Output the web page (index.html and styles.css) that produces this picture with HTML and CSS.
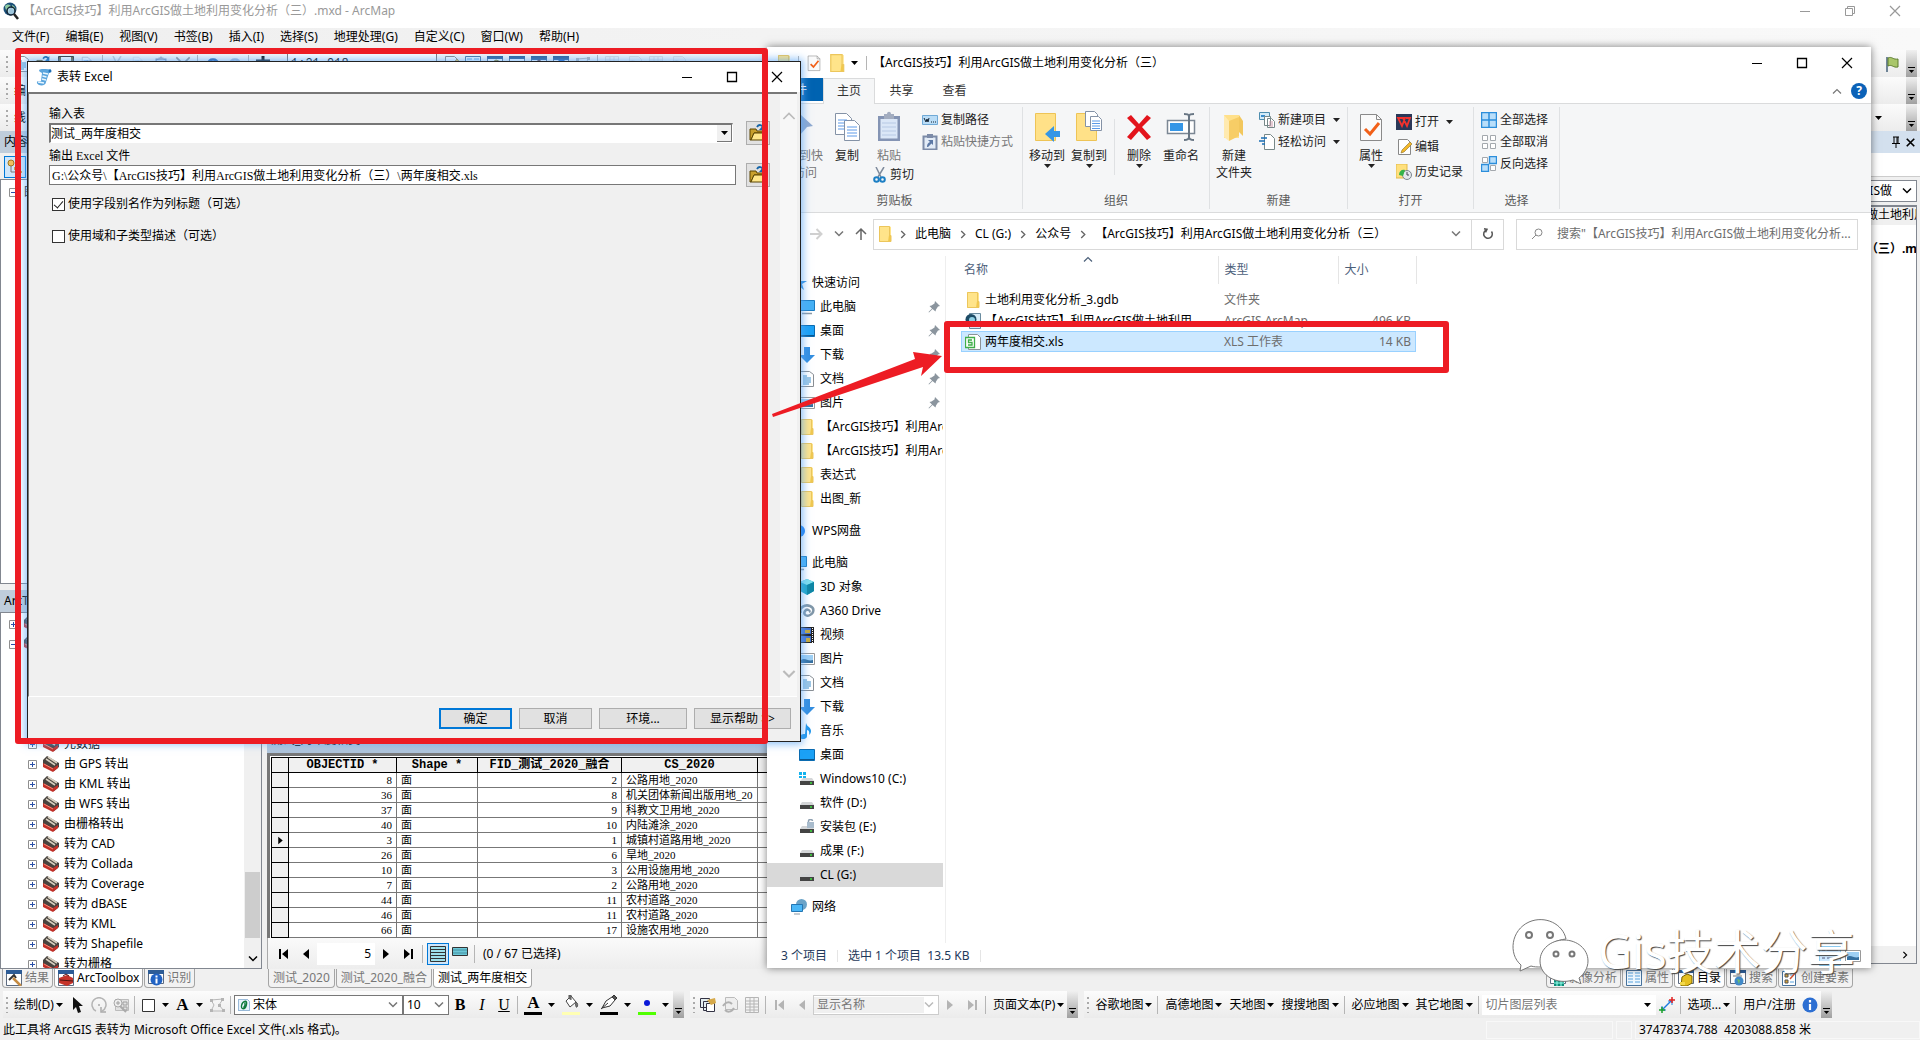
FILE: index.html
```html
<!DOCTYPE html>
<html lang="zh-CN">
<head>
<meta charset="utf-8">
<title>ArcMap</title>
<link rel="stylesheet" href="styles.css">
</head>
<body>
<svg class="defs" aria-hidden="true">
  <symbol id="caret" viewBox="0 0 7 4"><path d="M0 0h7L3.500 4z" fill="currentColor"/></symbol>
  <symbol id="chev" viewBox="0 0 10 6"><path d="M1 .5l4 4 4-4" fill="none" stroke="currentColor" stroke-width="1.500"/></symbol>
  <symbol id="chev-r" viewBox="0 0 6 10"><path d="M1 1l4 4-4 4" fill="none" stroke="currentColor" stroke-width="1.500"/></symbol>
  <symbol id="chev-up" viewBox="0 0 10 6"><path d="M1 5.500l4-4 4 4" fill="none" stroke="currentColor" stroke-width="1.200"/></symbol>
  <symbol id="min" viewBox="0 0 12 12"><path d="M1 6.500h10" stroke="currentColor"/></symbol>
  <symbol id="max" viewBox="0 0 12 12"><path d="M1.500 1.500h9v9h-9z" fill="none" stroke="currentColor" stroke-width="1.300"/></symbol>
  <symbol id="restore" viewBox="0 0 12 12"><path d="M1.500 3.500h7v7h-7zM3.500 3.500v-2h7v7h-2" fill="none" stroke="currentColor"/></symbol>
  <symbol id="close" viewBox="0 0 12 12"><path d="M1 1l10 10M11 1L1 11" stroke="currentColor" stroke-width="1.200"/></symbol>
  <symbol id="globe" viewBox="0 0 18 18"><circle cx="8" cy="7" r="6.500" fill="#1b4f78"/><path d="M3 4c3-3 6-1 6 1s-2 1-2 4-4-1-4-5zM10 3c3 1 4 4 3 6l-3-2z" fill="#8cc9a0"/><circle cx="9" cy="9" r="4" fill="#bfe4f5" fill-opacity=".8" stroke="#123" stroke-width="1.500"/><path d="M12 12l4 5" stroke="#222" stroke-width="2.500"/></symbol>
  <symbol id="scroll" viewBox="0 0 18 18"><path d="M4 2c3-2 8 0 12-1-1 2 0 4-2 4l-3 9c0 3-4 4-7 3-2-1-3-3-1-4 1 0 2 1 3 0l1-8c-1-1-3-1-3-3z" fill="#5ba5dd"/><path d="M8 5l5 1M7.500 8l4 1M7 11l4 1M3 14l6 1" stroke="#e8f6ff" stroke-width="1.300"/><circle cx="15" cy="3" r="1.500" fill="#1f6fb5"/></symbol>
  <symbol id="folder" viewBox="0 0 16 16"><path d="M2 0h10l2 1v15H2z" fill="#ffe48a"/><path d="M12 9h2v7h-3z" fill="#f1c84c"/><path d="M2.500.5h10v9h1.500v6H2.500z" fill="none" stroke="#ecc65c"/></symbol>
  <symbol id="openf" viewBox="0 0 18 18"><path d="M1 5h6l1 2h7v2H5l-3 7H1z" fill="#c8a02c" stroke="#5a4500"/><path d="M5 9h13l-3 7H2z" fill="#ffe78a" stroke="#5a4500"/><path d="M8 3c2-3 5-2 6 0" fill="none" stroke="#1464a8" stroke-width="2"/><path d="M15 0v6h-5z" fill="#1464a8"/></symbol>
  <symbol id="doccheck" viewBox="0 0 32 32"><path d="M5.500 3.500h16l5 5v21h-21z" fill="#fafafa" stroke="#8a8a8a"/><path d="M21.500 3.500v5h5" fill="none" stroke="#8a8a8a"/><path d="M10 18l5 5 9-11" fill="none" stroke="#f26018" stroke-width="3"/></symbol>
  <symbol id="pinbig" viewBox="0 0 32 32"><path d="M18 4l12 11-6 1-7 8-8-7 8-7z" fill="#8fa9cf"/></symbol>
  <symbol id="copy" viewBox="0 0 32 32"><g fill="#fff" stroke="#8492a6"><path d="M4.500 2.500h11l5 5v16h-16z"/><path d="M13.500 9.500h10l5 5v15h-15z"/></g><path d="M7 9h9M7 12h6M7 15h6M7 18h6M16 16h10M16 19h10M16 22h10M16 25h10" stroke="#5c9ae8"/></symbol>
  <symbol id="paste" viewBox="0 0 32 32"><path d="M5 5h22v25H5z" fill="#8494b4"/><path d="M7.500 8h17v19.500h-17z" fill="#dbe7f7"/><path d="M11 3h3c0-3 4-3 4 0h3v5H11z" fill="#a3adc0"/><path d="M9 12h14M9 16h14M9 20h14M9 24h14" stroke="#b7c9e4"/></symbol>
  <symbol id="moveto" viewBox="0 0 32 32"><path d="M4.500 2.500h20v27h-20z" fill="#ffe188" stroke="#eec456"/><path d="M14 23l9-8v5h6v6h-6v5z" fill="#3596e6"/></symbol>
  <symbol id="copyto" viewBox="0 0 32 32"><path d="M3.500 2.500h20v27h-20z" fill="#ffe188" stroke="#eec456"/><g fill="#fff" stroke="#8492a6"><path d="M12.500.5h9l3 3v12h-12z"/><path d="M17.500 5.500h8l3 3v11h-11z"/></g><path d="M19 10h8M19 12.500h8M19 15h8M19 17.500h8" stroke="#5c9ae8"/></symbol>
  <symbol id="del" viewBox="0 0 32 32"><path d="M4 7l4-3 8 9 8-9 4 3-9 9 9 10-4 3-8-9-8 9-4-3 9-10z" fill="#e3141c"/></symbol>
  <symbol id="rename" viewBox="0 0 32 32"><path d="M2.500 9.500h27v13h-27z" fill="#fff" stroke="#7b8794" stroke-width="1.500"/><path d="M5 12h13v8H5z" fill="#3596e6"/><path d="M19 3c3 0 5 0 5 3v20c0 2-2 3-5 3M29 3c-3 0-5 0-5 3v20c0 2 2 3 5 3" fill="none" stroke="#687684" stroke-width="2"/></symbol>
  <symbol id="newf" viewBox="0 0 32 32"><path d="M6 4h15v23H6z" fill="#ffe08a"/><path d="M11 10l10-4v19l-10 5z" fill="#f7cd66"/><path d="M21 4v17l4 4V10z" fill="#f2c75d"/><path d="M6 4l5 6v20l-5-4z" fill="#ffeab0"/></symbol>
  <symbol id="path" viewBox="0 0 16 16"><path d="M.5 3.500h15v9H.5z" fill="#b9dcf6" stroke="#6fa9d6"/><path d="M2 6l2 4 1-3 1 3 1-4M9 10h1M11 10h1M13 10h1" fill="none" stroke="#123"/></symbol>
  <symbol id="shortcut" viewBox="0 0 16 16"><path d="M1.500 2.500h13v13h-13z" fill="#e3ecf7" stroke="#7c8ba8" stroke-width="2"/><path d="M5 0h6v4H5z" fill="#7c8ba8"/><path d="M5 13c0-3 1-4 3-5L6 6h5v5L9.500 9.500 6 13z" fill="#5d79a5"/></symbol>
  <symbol id="cut" viewBox="0 0 16 16"><path d="M4 0l5 10M12 0L6 10" stroke="#7e8b9c" stroke-width="1.500"/><g fill="none" stroke="#1c7fc4" stroke-width="2"><circle cx="4.500" cy="12.500" r="2.300"/><circle cx="10.500" cy="12.500" r="2.300"/></g></symbol>
  <symbol id="newitem" viewBox="0 0 16 16"><path d="M.5.5h10v7H.5z" fill="#d4ecf9" stroke="#4d8dae"/><path d="M2 3h4v2H2z" fill="#3a8dcc"/><path d="M5.500 4.500h6v9h-6zM8.500 6.500h4l3 3v6h-7z" fill="#fff" stroke="#788"/><path d="M10 10h4M10 12h4M10 14h4" stroke="#c9a"/></symbol>
  <symbol id="easy" viewBox="0 0 16 16"><path d="M5.500.5h6l4 4v11h-10z" fill="#fff" stroke="#788"/><path d="M2 4h6M0 7h6M3 10h3" stroke="#1b6fb5" stroke-width="1.500"/></symbol>
  <symbol id="wps" viewBox="0 0 16 16"><path d="M0 0h16v16H0z" fill="#2a3858"/><path d="M2 4h7l-3 8zM7 4l4 8 3-8h-4" fill="none" stroke="#f3322d" stroke-width="1.800"/></symbol>
  <symbol id="edit" viewBox="0 0 16 16"><path d="M2.500.5h9l3 3v12h-12z" fill="#fff" stroke="#888"/><path d="M5 14l1-3 8-8 2 2-8 8z" fill="#f4b929" stroke="#8a6d2a" stroke-width=".6"/></symbol>
  <symbol id="history" viewBox="0 0 16 16"><path d="M0 0h11v14H0z" fill="#ffe07d" stroke="#e2b94c"/><circle cx="11" cy="11" r="4.500" fill="#e4e8ec" stroke="#7c858e"/><path d="M11 8v3h2" stroke="#445" fill="none"/><path d="M3 11c0-4 3-6 6-5l-2 6z" fill="#35b34a"/></symbol>
  <symbol id="selall" viewBox="0 0 16 16"><path d="M.5.5h15v15H.5zM8 0v16M0 8h16" fill="#b8defa" stroke="#2c8edb" stroke-width="1.500"/></symbol>
  <symbol id="selnone" viewBox="0 0 16 16"><path d="M1.500 1.500h5v5h-5zM9.500 1.500h5v5h-5zM1.500 9.500h5v5h-5zM9.500 9.500h5v5h-5z" fill="#fff" stroke="#a3a8ad"/></symbol>
  <symbol id="selinv" viewBox="0 0 16 16"><path d="M1.500 1.500h5v5h-5zM9.500 9.500h5v5h-5z" fill="#fff" stroke="#a3a8ad"/><path d="M8.500.5h7v7h-7zM.5 8.500h7v7h-7z" fill="#b8defa" stroke="#2c8edb" stroke-width="1.400"/></symbol>
  <symbol id="pc" viewBox="0 0 16 16"><path d="M.5 1.500h15v10H.5z" fill="#45b1f5" stroke="#1c7cc0"/><path d="M3 14.500h10" stroke="#8b98a5" stroke-width="1.500"/></symbol>
  <symbol id="desk" viewBox="0 0 16 16"><path d="M.5 2.500h15v11H.5z" fill="#1ba1f5" stroke="#0a6bb0"/><path d="M1 12.500h14" stroke="#0a5890"/></symbol>
  <symbol id="down" viewBox="0 0 16 16"><path d="M5 0h6v8h5l-8 8-8-8h5z" fill="#338ee0"/></symbol>
  <symbol id="doc" viewBox="0 0 16 16"><path d="M1.500.5h9l4 3v12h-13z" fill="#fff" stroke="#8a8f94"/><path d="M4 5h4M4 7h8M4 9h8M4 11h8M4 13h6" stroke="#3d8ec9"/></symbol>
  <symbol id="pic" viewBox="0 0 16 16"><path d="M.5 2.500h15v11H.5z" fill="#fff" stroke="#999"/><path d="M2 4h12v8H2z" fill="#9fd0f4"/><path d="M2 9c4-3 7 2 12 0v3H2z" fill="#356f9f"/></symbol>
  <symbol id="cube" viewBox="0 0 16 16"><path d="M8 0l7 3v9l-7 4-7-4V3z" fill="#1ea7c5"/><path d="M8 0l7 3-7 3-7-3z" fill="#7fe0ee"/><path d="M8 6l7-3v9l-7 4z" fill="#0e86a4"/></symbol>
  <symbol id="a360" viewBox="0 0 16 16"><path d="M2 10c-3-5 4-9 9-7s4 7 0 9-7-1-5-4 6 0 4 1" fill="none" stroke="#8197a8" stroke-width="2.500"/></symbol>
  <symbol id="undo" viewBox="0 0 16 16"><path d="M4 8c1-6 9-6 10 0v6" fill="none" stroke="#2a5ea8" stroke-width="2.500"/><path d="M0 5l9 1-6 6z" fill="#2a5ea8"/></symbol>
  <symbol id="add" viewBox="0 0 16 16"><path d="M8 0v16M1 5h14" stroke="#111" stroke-width="3"/></symbol>
  <symbol id="save" viewBox="0 0 16 16"><path d="M.5.5h15v15H.5z" fill="#6b6436" stroke="#333"/><path d="M3 1h10v8H3z" fill="#fff"/></symbol>
  <symbol id="video" viewBox="0 0 16 16"><path d="M0 0h15v16H0z" fill="#222"/><path d="M2 1h10v6H2zM2 9h10v6H2z" fill="#4573cf"/><path d="M6 3h5v3H6zM7 11h4v4H7z" fill="#c9a934"/><path d="M13.500 1v15" stroke="#fff" stroke-dasharray="1 1"/></symbol>
  <symbol id="music" viewBox="0 0 16 16"><path d="M7 0c1 4 5 4 5 8 0 2-1 3-2 4 1-4-1-5-2-5v6c0 4-7 4-7 1s3-3 5-3z" fill="#1e95ea"/></symbol>
  <symbol id="drive" viewBox="0 0 16 16"><path d="M3 7h10l2 3H1z" fill="#d4d6d8"/><path d="M1 10h14v4H1z" fill="#444"/><path d="M11 12h2" stroke="#3ee03e" stroke-width="1.500"/></symbol>
  <symbol id="drivec" viewBox="0 0 16 16"><path d="M0 1h3v3H0zM4 1h3v3H4zM0 5h3v2H0zM4 5h3v2H4z" fill="#12b2ee"/><path d="M4 7h9l2 3H1z" fill="#d4d6d8"/><path d="M1 10h14v4H1z" fill="#444"/><path d="M11 12h2" stroke="#3ee03e" stroke-width="1.500"/></symbol>
  <symbol id="drivee" viewBox="0 0 16 16"><path d="M3 7h10l2 3H1z" fill="#d4d6d8"/><path d="M1 10h14v4H1z" fill="#444"/><path d="M9.500 4V2c0-2 4-2 4 0" fill="none" stroke="#8fa1b2" stroke-width="1.500"/><path d="M8 3h7v6H8z" fill="#a9bccd"/><path d="M11 12h2" stroke="#3ee03e" stroke-width="1.500"/></symbol>
  <symbol id="net" viewBox="0 0 16 16"><circle cx="10.500" cy="5.500" r="5.500" fill="#6aa3c8"/><path d="M.5 5.500h11v7H.5z" fill="#4ab7f7" stroke="#2476b3"/><path d="M3 15h6" stroke="#8b98a5"/></symbol>
  <symbol id="star" viewBox="0 0 16 16"><path d="M8 1l2 5h6l-5 3 2 6-5-4-5 4 2-6-5-3h6z" fill="#2f8fe0"/></symbol>
  <symbol id="cloud" viewBox="0 0 16 16"><circle cx="8" cy="8" r="6" fill="#1b7ff0"/></symbol>
  <symbol id="pin" viewBox="0 0 12 12"><path d="M7 0l5 5-2 .5-2 3-.5 2L4.500 8 1 11.500l-.5-.5L4 7.500 1.500 5l2-.5 3-2z" fill="#8b959e"/></symbol>
  <symbol id="mxd" viewBox="0 0 16 16"><path d="M4.500.5h11v15h-11z" fill="#d9edf8" stroke="#6b8ca0"/><circle cx="6" cy="6.500" r="5.500" fill="#1d4c66"/><circle cx="7" cy="7" r="3" fill="#8fd0e4"/></symbol>
  <symbol id="xls" viewBox="0 0 16 16"><path d="M3.500.5h9l3 3v12h-12z" fill="#fff" stroke="#8b9297"/><path d="M.5 3.500h9v10h-9z" fill="#fff" stroke="#3fae49" stroke-width="1.300"/><path d="M7 6H3.500v2.500H7V11H3" fill="none" stroke="#3fae49" stroke-width="1.300"/></symbol>
  <symbol id="toolset" viewBox="0 0 16 16"><path d="M0 4l4-4 12 7v4l-5 4L0 9z" fill="#47423e"/><path d="M3 3l9 6M5 1l9 6" stroke="#d6cdbd" stroke-width="1.600"/><path d="M0 7l10 5 5-3v3l-5 4L0 11z" fill="#c23028"/><path d="M1 8l9 5" stroke="#f08a78"/></symbol>
  <symbol id="plus" viewBox="0 0 9 9"><path d="M.5.5h8v8h-8z" fill="#fff" stroke="#8f8f8f"/><path d="M2 4.500h5M4.500 2v5" stroke="#2a50a8"/></symbol>
  <symbol id="minus" viewBox="0 0 9 9"><path d="M.5.5h8v8h-8z" fill="#fff" stroke="#8f8f8f"/><path d="M2 4.500h5" stroke="#2a50a8"/></symbol>
  <symbol id="hammer" viewBox="0 0 16 16"><path d="M.5.5h15v15H.5z" fill="#fff" stroke="#5d6b80"/><path d="M0 0h16v4H0z" fill="#2d5c96"/><path d="M3 10l5-5 2 3" fill="none" stroke="#333" stroke-width="2"/><path d="M7 8l8 8" stroke="#c58b42" stroke-width="2.500"/></symbol>
  <symbol id="redbox" viewBox="0 0 16 16"><path d="M.5.5h15v15H.5z" fill="#fff" stroke="#5d6b80"/><path d="M0 0h16v4H0z" fill="#2d5c96"/><path d="M1 8l8-3 6 3v5l-6 3-8-3z" fill="#c5342a"/><path d="M5 6l3-2 3 2M2 10l13 1" stroke="#501410" fill="none"/></symbol>
  <symbol id="ident" viewBox="0 0 16 16"><path d="M.5.5h15v13H.5z" fill="#fff" stroke="#5d6b80"/><path d="M0 0h16v4H0z" fill="#2d5c96"/><circle cx="8.500" cy="9.500" r="6" fill="#2163c4"/><path d="M8.500 5.500v2M8.500 8.500v5" stroke="#fff" stroke-width="2"/></symbol>
  <symbol id="winimg" viewBox="0 0 16 16"><path d="M.5.5h15v13H.5z" fill="#fff" stroke="#5d6b80"/><path d="M0 0h16v3H0z" fill="#2d5c96"/><path d="M4 6h10v10H4z" fill="#0b8d78"/><path d="M7 6v10M11 6v10M4 9h10M4 13h10" stroke="#9fe"/></symbol>
  <symbol id="grid" viewBox="0 0 16 16"><path d="M.5.5h15v15H.5z" fill="#eef7fe" stroke="#47729c"/><path d="M2 3h5M9 3h5M2 6h5M9 6h5M2 9h5M9 9h5M2 12h5M9 12h5" stroke="#58a3de"/></symbol>
  <symbol id="catalog" viewBox="0 0 16 16"><path d="M.5.5h15v13H.5z" fill="#fff" stroke="#5d6b80"/><path d="M0 0h16v3H0z" fill="#2d5c96"/><path d="M4 7l5-3 5 2v7l-5 3-6 0z" fill="#e6c020" stroke="#7c6500"/><path d="M2 12h5v3H2z" fill="#f2d84a"/></symbol>
  <symbol id="search" viewBox="0 0 16 16"><path d="M.5.5h15v13H.5z" fill="#fff" stroke="#5d6b80"/><path d="M0 0h16v3H0z" fill="#2d5c96"/><path d="M3 6h9" stroke="#777"/><circle cx="9" cy="11" r="4.500" fill="#418ac9"/><path d="M7 9l3 1-1 4z" fill="#6ec06a"/></symbol>
  <symbol id="create" viewBox="0 0 16 16"><path d="M.5 1.500h13v14H.5z" fill="#fff" stroke="#47729c"/><path d="M3 4h3v3H3zM3 10h3v3H3z" fill="#d9a334" stroke="#555"/><path d="M8 5h4M8 12h4" stroke="#58a3de"/><path d="M8 9l7-8" stroke="#d05030" stroke-width="1.500"/></symbol>
  <symbol id="cursor" viewBox="0 0 16 16"><path d="M4 0v13l3-3 2 6 3-1-2-6h4z" fill="#111"/></symbol>
  <symbol id="rot" viewBox="0 0 16 16"><path d="M5 14a7 7 0 1 1 6 0" fill="none" stroke="#b5b5b5" stroke-width="1.500"/><path d="M10 10v5h5M8 7v2" stroke="#aaa" stroke-width="1.500" fill="none"/></symbol>
  <symbol id="zsel" viewBox="0 0 16 16"><path d="M2.500 2.500h13v11h-13z" fill="#e2e2e2" stroke="#bbb"/><circle cx="5" cy="6" r="4" fill="#eee" stroke="#a8a8a8"/><path d="M3 6h4M5 4v4M10 5h4v3h-4zM10 10h4v3h-4z" stroke="#a0a0a0" fill="none"/><path d="M7 9l6 6" stroke="#aaa" stroke-width="2"/></symbol>
  <symbol id="rect" viewBox="0 0 16 16"><path d="M2.500 2.500h12v12h-12z" fill="#fff" stroke="#333"/></symbol>
  <symbol id="verts" viewBox="0 0 16 16"><path d="M2 3l12-1-4 6 5 6H2l3-6z" fill="none" stroke="#b8b8b8"/><path d="M1 2h3v3H1zM12 1h3v3h-3zM9 7h3v3H9zM13 12h3v3h-3zM1 12h3v3H1z" fill="#b4b4b4"/></symbol>
  <symbol id="opent" viewBox="0 0 16 16"><path d="M.5.5h12l3 3v12H.5z" fill="#e8f2fb" stroke="#6c9ac5"/><path d="M10 3c-6 1-7 10-3 10s6-9 3-10zM9 5c1 2 0 6-2 6" fill="none" stroke="#117a3c" stroke-width="1.800"/></symbol>
  <symbol id="bucket" viewBox="0 0 16 16"><path d="M3 6l5-5 5 6-6 5z" fill="#fff" stroke="#444"/><path d="M13 7c2 1 2 4 1 5s-2-2-1-5M6 4V0h2v5" fill="#777" stroke="#555"/></symbol>
  <symbol id="pen" viewBox="0 0 16 16"><path d="M1 13l4-7 6-4 3 3-5 6z" fill="#fff" stroke="#333"/><path d="M0 14l7-6M11 2l2-2 3 3-2 2" stroke="#333" fill="#555"/></symbol>
  <symbol id="dot" viewBox="0 0 16 16"><circle cx="8" cy="8" r="3" fill="#0a18d8"/></symbol>
  <symbol id="pages" viewBox="0 0 16 16"><path d="M.5 1.500h9v9h-9zM3.500 4.500h9v9h-9z" fill="#e4eef2" stroke="#334"/><path d="M6.500 6.500h8v8h-8z" fill="#fff" stroke="#334"/><path d="M7 3l8-2 1 5-5 2z" fill="#d6a94a"/></symbol>
  <symbol id="refresh2" viewBox="0 0 16 16"><path d="M3.500.5h9l3 3v9h-12z" fill="#eee" stroke="#bbb"/><path d="M1 9c3-5 7-4 9-2M12 11c-3 5-7 4-9 2" stroke="#b0b0b0" stroke-width="2" fill="none"/></symbol>
  <symbol id="tbl" viewBox="0 0 16 16"><path d="M1.500.5h13v15h-13zM1 4h14M1 7h14M1 10h14M1 13h14M6 1v15M10 1v15" fill="#f3f3f3" stroke="#b5b5b5"/></symbol>
  <symbol id="first" viewBox="0 0 12 12"><path d="M1 1h2v10H1zM10 1v10L4 6z" fill="currentColor"/></symbol>
  <symbol id="prev" viewBox="0 0 12 12"><path d="M9 1v10L3 6z" fill="currentColor"/></symbol>
  <symbol id="next" viewBox="0 0 12 12"><path d="M3 1v10l6-5z" fill="currentColor"/></symbol>
  <symbol id="last" viewBox="0 0 12 12"><path d="M2 1v10l6-5zM9 1h2v10H9z" fill="currentColor"/></symbol>
  <symbol id="rec" viewBox="0 0 16 16"><path d="M.5.5h15v15H.5z" fill="#9fe0ea" stroke="#333"/><path d="M1 3.500h14M1 6.500h14M1 9.500h14M1 12.500h14" stroke="#333"/></symbol>
  <symbol id="recs" viewBox="0 0 16 16"><path d="M.5 1.500h15v8H.5z" fill="#6cc8d8" stroke="#333"/><path d="M1 4h14M1 7h14" stroke="#4590a0"/></symbol>
  <symbol id="link" viewBox="0 0 16 16"><path d="M4 12l8-8" stroke="#1e7be0" stroke-width="1.500"/><path d="M9 4h4v4M3 9v4h4" fill="none" stroke="#1e7be0"/><path d="M13 0v6M10 3h6" stroke="#e02020" stroke-width="1.500"/><path d="M3 10v6M0 13h6" stroke="#18a028" stroke-width="1.500"/></symbol>
  <symbol id="info" viewBox="0 0 16 16"><circle cx="8" cy="8" r="7.500" fill="#2d6fd2"/><path d="M8 3v2.500M8 7v6" stroke="#fff" stroke-width="2.200"/></symbol>
  <symbol id="flag" viewBox="0 0 16 16"><path d="M3 1v15" stroke="#45617a" stroke-width="1.500"/><path d="M4 2c4-2 5 2 10 1v8c-5 1-6-3-10-1z" fill="#a9c66a" stroke="#5c7c2e"/></symbol>
  <symbol id="layers" viewBox="0 0 16 16"><circle cx="4" cy="4" r="3" fill="#f0c060" stroke="#a07820"/><path d="M4 7v6h4M8 5h3" stroke="#777" fill="none"/><path d="M7 8h4v3H7zM8 12h7v2H8z" fill="#c9a050"/></symbol>
</svg>

<div class="app">
  <header class="titlebar">
    <svg class="i18"><use href="#globe"/></svg>
    <span class="grow">【ArcGIS技巧】利用ArcGIS做土地利用变化分析（三）.mxd - ArcMap</span>
    <span class="winbtns wide"><svg><use href="#min"/></svg><svg><use href="#restore"/></svg><svg><use href="#close"/></svg></span>
  </header>
  <nav class="menubar">
    <a href="#">文件(F)</a><a href="#">编辑(E)</a><a href="#">视图(V)</a><a href="#">书签(B)</a><a href="#">插入(I)</a><a href="#">选择(S)</a><a href="#">地理处理(G)</a><a href="#">自定义(C)</a><a href="#">窗口(W)</a><a href="#">帮助(H)</a>
  </nav>
  <div class="toprows">
    <div class="toprow">
      <span class="grip"></span>
      <svg class="i16"><use href="#doc"/></svg><svg class="i16"><use href="#openf"/></svg><svg class="i16"><use href="#save"/></svg><svg class="i16"><use href="#copy"/></svg><i class="sep"></i>
      <svg class="i16 faint"><use href="#cut"/></svg><svg class="i16 faint"><use href="#copy"/></svg><svg class="i16"><use href="#paste"/></svg><svg class="i16 faint"><use href="#close"/></svg><i class="sep"></i>
      <svg class="i16"><use href="#undo"/></svg><svg class="i16 faint"><use href="#undo"/></svg><i class="sep"></i>
      <svg class="i16"><use href="#add"/></svg><span class="scale">1:21,918</span>
      <svg class="i16"><use href="#edit"/></svg><svg class="i16"><use href="#grid"/></svg><svg class="i16"><use href="#catalog"/></svg><svg class="i16"><use href="#search"/></svg><svg class="i16"><use href="#redbox"/></svg><svg class="i16"><use href="#ident"/></svg><svg class="i16"><use href="#verts"/></svg><i class="sep"></i>
      <svg class="i16 faint"><use href="#tbl"/></svg><svg class="i16 faint"><use href="#refresh2"/></svg><svg class="i16 faint"><use href="#tbl"/></svg><svg class="i16 faint"><use href="#refresh2"/></svg>
      <span class="grow"></span>
      <svg class="i16"><use href="#flag"/></svg><span class="tbend"><svg><use href="#caret"/></svg></span>
    </div>
    <div class="toprow"><span class="grip"></span><span>编</span><span class="grow"></span><span class="tbend"><svg><use href="#caret"/></svg></span></div>
    <div class="toprow"><span class="grip"></span><span>线</span><span class="grow"></span><span>析</span><svg class="caret"><use href="#caret"/></svg><span class="tbend far"><svg><use href="#caret"/></svg></span></div>
  </div>

  <main class="work">
    <section class="dock left">
      <h2 class="dockhead">内容</h2>
      <div class="docktools"><button class="toolon" aria-label="按绘制顺序列出"><svg class="i16"><use href="#layers"/></svg></button></div>
      <div class="tree contents"><div class="trow top"><svg class="pm"><use href="#minus"/></svg><span>图</span></div></div>
      <h2 class="dockhead second">ArcToolbox</h2>
      <div class="tree toolbox">
        <div class="rows">
          <div class="trow top"><svg class="pm"><use href="#plus"/></svg><svg class="i16"><use href="#toolset"/></svg></div>
          <div class="trow top"><svg class="pm"><use href="#minus"/></svg><svg class="i16"><use href="#toolset"/></svg></div>
          <div class="sub">
            <div class="trow"><svg class="pm"><use href="#plus"/></svg><svg class="i16"><use href="#toolset"/></svg>元数据</div>
            <div class="trow"><svg class="pm"><use href="#plus"/></svg><svg class="i16"><use href="#toolset"/></svg>由 GPS 转出</div>
            <div class="trow"><svg class="pm"><use href="#plus"/></svg><svg class="i16"><use href="#toolset"/></svg>由 KML 转出</div>
            <div class="trow"><svg class="pm"><use href="#plus"/></svg><svg class="i16"><use href="#toolset"/></svg>由 WFS 转出</div>
            <div class="trow"><svg class="pm"><use href="#plus"/></svg><svg class="i16"><use href="#toolset"/></svg>由栅格转出</div>
            <div class="trow"><svg class="pm"><use href="#plus"/></svg><svg class="i16"><use href="#toolset"/></svg>转为 CAD</div>
            <div class="trow"><svg class="pm"><use href="#plus"/></svg><svg class="i16"><use href="#toolset"/></svg>转为 Collada</div>
            <div class="trow"><svg class="pm"><use href="#plus"/></svg><svg class="i16"><use href="#toolset"/></svg>转为 Coverage</div>
            <div class="trow"><svg class="pm"><use href="#plus"/></svg><svg class="i16"><use href="#toolset"/></svg>转为 dBASE</div>
            <div class="trow"><svg class="pm"><use href="#plus"/></svg><svg class="i16"><use href="#toolset"/></svg>转为 KML</div>
            <div class="trow"><svg class="pm"><use href="#plus"/></svg><svg class="i16"><use href="#toolset"/></svg>转为 Shapefile</div>
            <div class="trow"><svg class="pm"><use href="#plus"/></svg><svg class="i16"><use href="#toolset"/></svg>转为栅格</div>
          </div>
        </div>
        <div class="vscroll"><i class="thumb"></i><svg><use href="#chev"/></svg></div>
      </div>
      <div class="tabs">
        <button class="tab"><svg class="i16"><use href="#hammer"/></svg>结果</button><button class="tab on"><svg class="i16"><use href="#redbox"/></svg>ArcToolbox</button><button class="tab"><svg class="i16"><use href="#ident"/></svg>识别</button>
      </div>
    </section>

    <section class="center">
      <div class="mapview"></div>
      <h2 class="tblhead">测试_两年度相交</h2>
      <div class="tblframe">
        <table class="attr">
          <colgroup><col class="c0"><col class="c1"><col class="c2"><col class="c3"><col class="c4"><col></colgroup>
          <thead><tr><th></th><th>OBJECTID *</th><th>Shape *</th><th>FID_测试_2020_融合</th><th>CS_2020</th><th></th></tr></thead>
          <tbody>
            <tr><th></th><td class="n">8</td><td>面</td><td class="n">2</td><td>公路用地_2020</td><td></td></tr>
            <tr><th></th><td class="n">36</td><td>面</td><td class="n">8</td><td>机关团体新闻出版用地_20</td><td></td></tr>
            <tr><th></th><td class="n">37</td><td>面</td><td class="n">9</td><td>科教文卫用地_2020</td><td></td></tr>
            <tr><th></th><td class="n">40</td><td>面</td><td class="n">10</td><td>内陆滩涂_2020</td><td></td></tr>
            <tr class="cur"><th><svg><use href="#next"/></svg></th><td class="n">3</td><td>面</td><td class="n">1</td><td>城镇村道路用地_2020</td><td></td></tr>
            <tr><th></th><td class="n">26</td><td>面</td><td class="n">6</td><td>旱地_2020</td><td></td></tr>
            <tr><th></th><td class="n">10</td><td>面</td><td class="n">3</td><td>公用设施用地_2020</td><td></td></tr>
            <tr><th></th><td class="n">7</td><td>面</td><td class="n">2</td><td>公路用地_2020</td><td></td></tr>
            <tr><th></th><td class="n">44</td><td>面</td><td class="n">11</td><td>农村道路_2020</td><td></td></tr>
            <tr><th></th><td class="n">46</td><td>面</td><td class="n">11</td><td>农村道路_2020</td><td></td></tr>
            <tr><th></th><td class="n">66</td><td>面</td><td class="n">17</td><td>设施农用地_2020</td><td></td></tr>
          </tbody>
        </table>
      </div>
      <div class="recbar">
        <button class="ib" aria-label="第一条"><svg class="i12"><use href="#first"/></svg></button><button class="ib" aria-label="上一条"><svg class="i12"><use href="#prev"/></svg></button>
        <input class="recno" aria-label="记录" value="5">
        <button class="ib" aria-label="下一条"><svg class="i12"><use href="#next"/></svg></button><button class="ib" aria-label="最后一条"><svg class="i12"><use href="#last"/></svg></button>
        <i class="sep"></i><button class="toolon" aria-label="显示所有记录"><svg class="i16"><use href="#rec"/></svg></button><button class="ib" aria-label="显示所选记录"><svg class="i16"><use href="#recs"/></svg></button><i class="sep"></i>
        <span class="reccount">(0 / 67 已选择)</span>
      </div>
      <div class="tabs"><button class="tab">测试_2020</button><button class="tab">测试_2020_融合</button><button class="tab on">测试_两年度相交</button></div>
    </section>

    <section class="dock right">
      <div class="dockhead tools"><svg viewBox="0 0 12 12"><path d="M3 1h6M4 1v6M8 1v6M7 1v6M2 7.500h8M6 8v4" stroke="#000" fill="none"/></svg><svg class="bold" viewBox="0 0 12 12"><path d="M1 1l10 10M11 1L1 11" stroke="#000" stroke-width="2.200"/></svg></div>
      <div class="blank"></div>
      <div class="loc"><span>ArcGIS做</span><svg><use href="#chev"/></svg></div>
      <div class="catalog">
        <div class="clip crumb">做土地利用</div>
        <div class="clip strong">（三）.mxd</div>
        <div class="hscroll"><svg><use href="#chev-r"/></svg></div>
      </div>
      <div class="tabs">
        <button class="tab"><svg class="i16"><use href="#winimg"/></svg>影像分析</button><button class="tab"><svg class="i16"><use href="#grid"/></svg>属性</button><button class="tab on"><svg class="i16"><use href="#catalog"/></svg>目录</button><button class="tab"><svg class="i16"><use href="#search"/></svg>搜索</button><button class="tab"><svg class="i16"><use href="#create"/></svg>创建要素</button>
      </div>
    </section>
  </main>

  <div class="drawbars">
    <div class="bar">
      <span class="grip"></span>
      <button class="mb">绘制(D)<svg class="caret"><use href="#caret"/></svg></button>
      <button class="ib" aria-label="选择元素"><svg class="i16"><use href="#cursor"/></svg></button><button class="ib" aria-label="旋转"><svg class="i16"><use href="#rot"/></svg></button><button class="ib" aria-label="缩放至所选"><svg class="i16"><use href="#zsel"/></svg></button><i class="sep"></i>
      <button class="ib dd" aria-label="矩形"><svg class="i16"><use href="#rect"/></svg><svg class="caret"><use href="#caret"/></svg></button>
      <button class="ib dd" aria-label="文本"><b class="glyph">A</b><svg class="caret"><use href="#caret"/></svg></button>
      <button class="ib" aria-label="编辑折点"><svg class="i16"><use href="#verts"/></svg></button><i class="sep"></i>
      <span class="box font"><svg class="i12"><use href="#opent"/></svg><select aria-label="字体"><option>宋体</option></select><svg class="chev"><use href="#chev"/></svg></span>
      <span class="box size"><select aria-label="字号"><option>10</option></select><svg class="chev"><use href="#chev"/></svg></span>
      <button class="ib fmt"><b>B</b></button><button class="ib fmt"><i>I</i></button><button class="ib fmt"><u>U</u></button><i class="sep"></i>
      <button class="ib col" aria-label="字体颜色"><span class="black"><b class="glyph">A</b></span><svg class="caret"><use href="#caret"/></svg></button>
      <button class="ib col" aria-label="填充颜色"><span class="cream"><svg class="i16"><use href="#bucket"/></svg></span><svg class="caret"><use href="#caret"/></svg></button>
      <button class="ib col" aria-label="线颜色"><span class="black"><svg class="i16"><use href="#pen"/></svg></span><svg class="caret"><use href="#caret"/></svg></button>
      <button class="ib col" aria-label="标记颜色"><span class="green"><svg class="i16"><use href="#dot"/></svg></span><svg class="caret"><use href="#caret"/></svg></button>
      <span class="tbend"><svg><use href="#caret"/></svg></span>
    </div>
    <div class="bar">
      <span class="grip"></span>
      <button class="ib" aria-label="数据驱动页面设置"><svg class="i16"><use href="#pages"/></svg></button><button class="ib" aria-label="刷新"><svg class="i16"><use href="#refresh2"/></svg></button><button class="ib" aria-label="表"><svg class="i16"><use href="#tbl"/></svg></button><i class="sep"></i>
      <button class="ib off" aria-label="首页"><svg class="i12"><use href="#first"/></svg></button><button class="ib off" aria-label="上一页"><svg class="i12"><use href="#prev"/></svg></button>
      <span class="box page"><select aria-label="页面"><option>显示名称</option></select><svg class="chev"><use href="#chev"/></svg></span>
      <button class="ib off" aria-label="下一页"><svg class="i12"><use href="#next"/></svg></button><button class="ib off" aria-label="末页"><svg class="i12"><use href="#last"/></svg></button><i class="sep"></i>
      <button class="mb">页面文本(P)<svg class="caret"><use href="#caret"/></svg></button>
      <span class="tbend"><svg><use href="#caret"/></svg></span>
    </div>
    <div class="bar">
      <span class="grip"></span>
      <button class="mb">谷歌地图<svg class="caret"><use href="#caret"/></svg></button><i class="sep"></i>
      <button class="mb">高德地图<svg class="caret"><use href="#caret"/></svg></button><button class="mb">天地图<svg class="caret"><use href="#caret"/></svg></button><button class="mb">搜搜地图<svg class="caret"><use href="#caret"/></svg></button><i class="sep"></i>
      <button class="mb">必应地图<svg class="caret"><use href="#caret"/></svg></button><button class="mb">其它地图<svg class="caret"><use href="#caret"/></svg></button><i class="sep"></i>
      <span class="box tiles"><select aria-label="切片图层"><option>切片图层列表</option></select><svg class="caret"><use href="#caret"/></svg></span>
      <button class="ib" aria-label="连接"><svg class="i16"><use href="#link"/></svg></button><i class="sep"></i>
      <button class="mb">选项...<svg class="caret"><use href="#caret"/></svg></button><i class="sep"></i>
      <button class="mb">用户/注册</button><button class="ib" aria-label="信息"><svg class="i16"><use href="#info"/></svg></button>
      <span class="tbend"><svg><use href="#caret"/></svg></span>
    </div>
  </div>
  <footer class="status"><span class="grow">此工具将 ArcGIS 表转为 Microsoft Office Excel 文件(.xls 格式)。</span><i class="cell w1"></i><i class="cell w2"></i><span class="cell coords">37478374.788&nbsp; 4203088.858 米</span></footer>
</div>

<section class="explorer">
  <div class="extitle">
    <svg class="i16"><use href="#folder"/></svg><i class="sep"></i><svg class="i18"><use href="#doccheck"/></svg><svg class="i18"><use href="#folder"/></svg><svg class="caret"><use href="#caret"/></svg><i class="sep"></i>
    <span class="grow">【ArcGIS技巧】利用ArcGIS做土地利用变化分析（三）</span>
    <span class="winbtns"><svg><use href="#min"/></svg><svg><use href="#max"/></svg><svg><use href="#close"/></svg></span>
  </div>
  <div class="extabs">
    <button class="filetab">文件</button><button class="rtab on">主页</button><button class="rtab">共享</button><button class="rtab">查看</button>
    <span class="grow"></span><svg class="chev"><use href="#chev-up"/></svg><span class="help">?</span>
  </div>
  <div class="ribbon">
    <div class="group g1">
      <div class="gbody">
        <button class="big gray"><svg><use href="#pinbig"/></svg>固定到快<br>速访问</button>
        <button class="big"><svg><use href="#copy"/></svg>复制</button>
        <div class="pastecol"><button class="big gray"><svg><use href="#paste"/></svg>粘贴</button><button class="small"><svg class="i16"><use href="#cut"/></svg>剪切</button></div>
        <div class="stack"><button class="small"><svg class="i16"><use href="#path"/></svg>复制路径</button><button class="small gray"><svg class="i16"><use href="#shortcut"/></svg>粘贴快捷方式</button></div>
      </div>
      <div class="glabel">剪贴板</div>
    </div>
    <div class="group g2">
      <div class="gbody">
        <button class="big"><svg><use href="#moveto"/></svg>移动到<svg class="caret"><use href="#caret"/></svg></button>
        <button class="big"><svg><use href="#copyto"/></svg>复制到<svg class="caret"><use href="#caret"/></svg></button>
        <i class="sep"></i>
        <button class="big"><svg><use href="#del"/></svg>删除<svg class="caret"><use href="#caret"/></svg></button>
        <button class="big"><svg><use href="#rename"/></svg>重命名</button>
      </div>
      <div class="glabel">组织</div>
    </div>
    <div class="group g3">
      <div class="gbody">
        <button class="big"><svg><use href="#newf"/></svg>新建<br>文件夹</button>
        <div class="stack"><button class="small"><svg class="i16"><use href="#newitem"/></svg>新建项目<svg class="caret"><use href="#caret"/></svg></button><button class="small"><svg class="i16"><use href="#easy"/></svg>轻松访问<svg class="caret"><use href="#caret"/></svg></button></div>
      </div>
      <div class="glabel">新建</div>
    </div>
    <div class="group g4">
      <div class="gbody">
        <button class="big"><svg><use href="#doccheck"/></svg>属性<svg class="caret"><use href="#caret"/></svg></button>
        <div class="stack loose"><button class="small"><svg class="i16"><use href="#wps"/></svg>打开<svg class="caret"><use href="#caret"/></svg></button><button class="small"><svg class="i16"><use href="#edit"/></svg>编辑</button><button class="small"><svg class="i16"><use href="#history"/></svg>历史记录</button></div>
      </div>
      <div class="glabel">打开</div>
    </div>
    <div class="group g5">
      <div class="gbody">
        <div class="stack"><button class="small"><svg class="i16"><use href="#selall"/></svg>全部选择</button><button class="small"><svg class="i16"><use href="#selnone"/></svg>全部取消</button><button class="small"><svg class="i16"><use href="#selinv"/></svg>反向选择</button></div>
      </div>
      <div class="glabel">选择</div>
    </div>
  </div>
  <div class="addrrow">
    <svg class="fwd" viewBox="0 0 14 14"><path d="M1 7h11M7.500 2l5 5-5 5" fill="none" stroke="#d0d0d0" stroke-width="2"/></svg>
    <svg class="chev"><use href="#chev"/></svg>
    <svg class="up" viewBox="0 0 14 14"><path d="M7 13V2M2 7l5-5 5 5" fill="none" stroke="#666" stroke-width="1.500"/></svg>
    <div class="addr">
      <svg class="i16"><use href="#folder"/></svg><svg class="cr"><use href="#chev-r"/></svg><span>此电脑</span><svg class="cr"><use href="#chev-r"/></svg><span>CL (G:)</span><svg class="cr"><use href="#chev-r"/></svg><span>公众号</span><svg class="cr"><use href="#chev-r"/></svg><span class="grow">【ArcGIS技巧】利用ArcGIS做土地利用变化分析（三）</span><svg class="chev"><use href="#chev"/></svg>
      <span class="reload"><svg viewBox="0 0 12 12"><path d="M9.500 3.500A4.300 4.300 0 1 1 4 2.200M2 .8l3 .6-1.500 3" fill="none" stroke="#555" stroke-width="1.500"/></svg></span>
    </div>
    <label class="searchbox"><svg viewBox="0 0 12 12"><circle cx="7.500" cy="4.500" r="3.500" fill="none" stroke="#888"/><path d="M5 7l-4 4" stroke="#888"/></svg><input type="text" aria-label="搜索" placeholder="搜索&quot;【ArcGIS技巧】利用ArcGIS做土地利用变化分析..."></label>
  </div>
  <div class="exmain">
    <nav class="navpane">
      <a href="#" class="l0"><svg class="i16"><use href="#star"/></svg>快速访问</a>
      <a href="#"><svg class="i16"><use href="#pc"/></svg><span>此电脑</span><svg class="pin"><use href="#pin"/></svg></a>
      <a href="#"><svg class="i16"><use href="#desk"/></svg><span>桌面</span><svg class="pin"><use href="#pin"/></svg></a>
      <a href="#"><svg class="i16"><use href="#down"/></svg><span>下载</span><svg class="pin"><use href="#pin"/></svg></a>
      <a href="#"><svg class="i16"><use href="#doc"/></svg><span>文档</span><svg class="pin"><use href="#pin"/></svg></a>
      <a href="#"><svg class="i16"><use href="#pic"/></svg><span>图片</span><svg class="pin"><use href="#pin"/></svg></a>
      <a href="#"><svg class="i16"><use href="#folder"/></svg><span>【ArcGIS技巧】利用ArcGIS</span></a>
      <a href="#"><svg class="i16"><use href="#folder"/></svg><span>【ArcGIS技巧】利用ArcGIS</span></a>
      <a href="#"><svg class="i16"><use href="#folder"/></svg>表达式</a>
      <a href="#"><svg class="i16"><use href="#folder"/></svg>出图_新</a>
      <a href="#" class="l0 gap"><svg class="i16"><use href="#cloud"/></svg>WPS网盘</a>
      <a href="#" class="l0 gap"><svg class="i16"><use href="#pc"/></svg>此电脑</a>
      <a href="#"><svg class="i16"><use href="#cube"/></svg>3D 对象</a>
      <a href="#"><svg class="i16"><use href="#a360"/></svg>A360 Drive</a>
      <a href="#"><svg class="i16"><use href="#video"/></svg>视频</a>
      <a href="#"><svg class="i16"><use href="#pic"/></svg>图片</a>
      <a href="#"><svg class="i16"><use href="#doc"/></svg>文档</a>
      <a href="#"><svg class="i16"><use href="#down"/></svg>下载</a>
      <a href="#"><svg class="i16"><use href="#music"/></svg>音乐</a>
      <a href="#"><svg class="i16"><use href="#desk"/></svg>桌面</a>
      <a href="#"><svg class="i16"><use href="#drivec"/></svg>Windows10 (C:)</a>
      <a href="#"><svg class="i16"><use href="#drive"/></svg>软件 (D:)</a>
      <a href="#"><svg class="i16"><use href="#drivee"/></svg>安装包 (E:)</a>
      <a href="#"><svg class="i16"><use href="#drive"/></svg>成果 (F:)</a>
      <a href="#" class="sel"><svg class="i16"><use href="#drive"/></svg>CL (G:)</a>
      <a href="#" class="l0 gap"><svg class="i16"><use href="#net"/></svg>网络</a>
    </nav>
    <div class="files">
      <table>
        <colgroup><col class="f1"><col class="f2"><col class="f3"></colgroup>
        <thead><tr><th>名称<svg class="sort"><use href="#chev-up"/></svg></th><th>类型</th><th>大小</th></tr></thead>
        <tbody>
          <tr><td><svg class="i16"><use href="#folder"/></svg>土地利用变化分析_3.gdb</td><td>文件夹</td><td></td></tr>
          <tr><td><svg class="i16"><use href="#mxd"/></svg>【ArcGIS技巧】利用ArcGIS做土地利用</td><td>ArcGIS ArcMap</td><td>496 KB</td></tr>
          <tr class="sel"><td><svg class="i16"><use href="#xls"/></svg>两年度相交.xls</td><td>XLS 工作表</td><td>14 KB</td></tr>
        </tbody>
      </table>
    </div>
  </div>
  <div class="exstatus"><span>3 个项目</span><i class="sep"></i><span>选中 1 个项目&nbsp; 13.5 KB</span><i class="sep"></i><span class="grow"></span>
    <svg class="i24" viewBox="0 0 22 20"><path d="M.5.500h21v19H.5z" fill="#cce8ff" stroke="#8ccaf0"/><path d="M3 4h3M8 4h11M3 8h3M8 8h11M3 12h3M8 12h11M3 16h3M8 16h11" stroke="#557"/></svg><svg class="i16"><use href="#pic"/></svg></div>
</section>

<form class="dialog">
  <div class="dtitle"><svg class="i18"><use href="#scroll"/></svg><span class="grow">表转 Excel</span><span class="winbtns"><svg><use href="#min"/></svg><svg><use href="#max"/></svg><svg><use href="#close"/></svg></span></div>
  <div class="dbody">
    <div class="fields">
      <label for="intable">输入表</label>
      <div class="line"><span class="combo"><select id="intable"><option>测试_两年度相交</option></select><span class="arrow"><svg class="caret"><use href="#caret"/></svg></span></span><button type="button" class="browse" aria-label="浏览输入表"><svg class="i18"><use href="#openf"/></svg></button></div>
      <label for="outfile">输出 Excel 文件</label>
      <div class="line"><input id="outfile" class="text" value="G:\公众号\【ArcGIS技巧】利用ArcGIS做土地利用变化分析（三）\两年度相交.xls"><button type="button" class="browse" aria-label="浏览输出文件"><svg class="i18"><use href="#openf"/></svg></button></div>
      <label class="check"><input type="checkbox" checked>使用字段别名作为列标题（可选）</label>
      <label class="check"><input type="checkbox">使用域和子类型描述（可选）</label>
    </div>
    <div class="dscroll"><svg><use href="#chev-up"/></svg><svg><use href="#chev"/></svg></div>
  </div>
  <div class="dfoot"><button type="button" class="def">确定</button><button type="button">取消</button><button type="button" class="wide">环境...</button><button type="button" class="wider">显示帮助 &gt;&gt;</button></div>
</form>

<div class="mark markdialog"></div>
<div class="mark markfile"></div>
<svg class="markarrow" viewBox="0 0 170 66" aria-hidden="true"><path d="M0 62L143 7 141 0 170 4 149 24 151 15 1 65z" fill="#ed1c24"/></svg>

<div class="watermark">
  <svg viewBox="0 0 78 66"><g fill="#fff" stroke="#777" stroke-width="1"><path d="M9 47C-4 36-1 12 17 4c16-7 34 2 37 17-18 2-28 14-25 28-4 0-7 0-10-1L8 53z"/><path d="M52 22c13 0 24 9 24 21 0 7-4 13-9 17l2 6-8-4c-16 5-33-4-33-19 0-12 11-21 24-21z"/></g><g fill="#fff" stroke="#777" stroke-width="2"><circle cx="17" cy="17" r="3"/><circle cx="38" cy="17" r="3"/><circle cx="44" cy="36" r="2.500"/><circle cx="60" cy="36" r="2.500"/></g></svg>
  <span>Gis技术分享</span>
</div>
</body>
</html>
```

FILE: styles.css
```css
* { box-sizing: border-box; }
body {
  margin: 0;
  font: 12px/16px "Noto Sans", "Noto Sans CJK SC", sans-serif;
  color: #000;
  background: #f0f0f0;
  overflow: hidden;
}
button, input, select { font: inherit; color: inherit; margin: 0; padding: 0; border: 0; background: none; }
select { appearance: none; outline: 0; }
button { display: flex; align-items: center; white-space: nowrap; }
a { color: inherit; text-decoration: none; }
svg { display: block; flex: none; }
h2 { margin: 0; font-size: 12px; font-weight: 400; }
.defs { position: absolute; width: 0; height: 0; }
.grow { flex: 1; min-width: 0; }
.i12 { width: 12px; height: 12px; }
.i16 { width: 16px; height: 16px; }
.i18 { width: 18px; height: 18px; }
.i24 { width: 22px; height: 20px; }
.caret { width: 7px; height: 4px; }
.chev { width: 10px; height: 6px; color: #777; }
.faint { opacity: .4; }
.sep { width: 1px; height: 18px; background: #b5b5b5; flex: none; }
.grip { width: 2px; height: 16px; flex: none; background: repeating-linear-gradient(#aaa 0 2px, transparent 2px 5px); }
.winbtns { display: flex; gap: 33px; }
.winbtns svg { width: 12px; height: 12px; }

/* main window */
.app { display: flex; flex-direction: column; min-height: 100vh; }
.titlebar { height: 28px; background: #fff; display: flex; align-items: center; padding: 0 19px 6px 2px; gap: 3px; color: #999; line-height: 18px; }
.menubar { height: 22px; display: flex; gap: 16px; padding: 0 12px; line-height: 18px; background: linear-gradient(90deg, #efefef, #f9f9f9); }
.toprows { background: #f4f4f4; }
.toprow { display: flex; align-items: center; height: 27px; padding: 0 3px 0 6px; gap: 6px; background: linear-gradient(#fbfbfb, #ececec); }
.scale { width: 150px; height: 22px; padding-left: 3px; margin-left: 10px; border: 1px solid #777; background: #fff; font-family: "Liberation Mono", monospace; line-height: 20px; }
.tbend { width: 11px; height: 27px; flex: none; display: flex; align-items: flex-end; justify-content: center; padding-bottom: 4px; background: linear-gradient(#f0f0f0, #a0a0a0); }
.tbend svg { width: 7px; height: 6px; padding-top: 2px; border-top: 1px solid #000; }
.tbend.far { margin-left: 18px; }
.work { flex: 1; display: flex; gap: 5px; min-height: 0; }
.dock { display: flex; flex-direction: column; }
.left { width: 262px; }
.right { width: 374px; }
.center { flex: 1; display: flex; flex-direction: column; min-width: 0; }
.dockhead { height: 22px; padding: 0 4px; line-height: 22px; background: #bfcddb; flex: none; }
.dockhead.second { margin-top: 6px; }
.docktools { height: 26px; padding: 3px 4px; }
.toolon { width: 22px; height: 22px; justify-content: center; border: 1px solid #0078d7; background: #cfe6fa; flex: none; }
.tree { background: #fff; border: 1px solid #828790; overflow: hidden; }
.contents { flex: 1; padding-top: 2px; }
.toolbox { height: 357px; display: flex; }
.rows { flex: 1; padding-top: 1px; }
.sub { padding-top: 80px; }
.trow { display: flex; align-items: center; height: 20px; padding-left: 27px; gap: 5px; }
.trow.top { padding-left: 8px; }
.trow .pm { width: 9px; height: 9px; margin-right: 1px; }
.vscroll { width: 17px; background: #f0f0f0; display: flex; flex-direction: column; align-items: center; justify-content: flex-end; padding-bottom: 6px; }
.vscroll .thumb { width: 15px; height: 66px; background: #cdcdcd; }
.vscroll svg { width: 10px; height: 6px; margin-top: 18px; }
.tabs { height: 19px; display: flex; gap: 1px; padding-left: 2px; flex: none; }
.tab { height: 19px; padding: 0 4px; gap: 3px; color: #777; border: 1px solid #a5a5a5; border-top: 0; border-radius: 0 0 4px 4px; background: #f2f2f2; }
.tab.on { color: #000; background: #fff; }
.dock .tab { padding: 0 3px; }
.center .tabs { padding-left: 1px; }
.right .tabs { padding-left: 0; }
.mapview { flex: 1; background: #fff; }
.tblhead { height: 22px; line-height: 18px; padding: 0 4px; background: linear-gradient(#bfcddb, #afc3da); }
.tblframe { border: 2px solid #777; border-width: 3px 0 0 3px; padding: 1px 0 0 1px; background: #fff; }
.attr { border-collapse: collapse; table-layout: fixed; width: 100%; font: 11px/14px "Liberation Serif", "Noto Sans CJK SC", serif; }
.attr .c0 { width: 17px; } .attr .c1 { width: 108px; } .attr .c2 { width: 81px; } .attr .c3 { width: 144px; } .attr .c4 { width: 136px; }
.attr td, .attr th { height: 15px; padding: 0 4px; border: 1px solid #777; white-space: nowrap; overflow: hidden; }
.attr th { background: #f0f0f0; border-color: #000; padding: 0; }
.attr tbody th svg { width: 9px; height: 9px; margin: 0 auto; }
.attr thead th { font: bold 12px/14px "Liberation Mono", "Noto Sans CJK SC", monospace; }
.attr .n { text-align: right; }
.recbar { height: 31px; display: flex; align-items: center; padding-left: 5px; background: linear-gradient(#fafafa, #ededed); border-left: 1px solid #aaa; }
.recno { width: 58px; height: 22px; background: #fff; text-align: right; padding-right: 4px; }
.recbar .sep { margin: 0 4px 0 3px; }
.reccount { padding-left: 4px; }
.dockhead.tools { display: flex; justify-content: flex-end; align-items: center; gap: 4px; background: #d3e0ee; padding-right: 5px; }
.tools svg { width: 12px; height: 12px; }
.tools .bold { width: 9px; height: 9px; }
.blank { height: 24px; background: #fff; border-bottom: 1px solid #ccc; }
.loc { height: 22px; margin: 3px 3px 3px 0; border: 1px solid #828790; background: #fff; display: flex; align-items: center; justify-content: flex-end; gap: 10px; padding-right: 4px; }
.loc svg, .hscroll svg { width: 10px; height: 8px; }
.catalog { flex: 1; display: flex; flex-direction: column; margin: 0 3px 5px 0; background: #fff; border: 1px solid #828790; border-width: 2px 1px 1px 0; }
.clip { padding-left: 320px; width: 370px; overflow: hidden; white-space: nowrap; }
.crumb { height: 18px; background: #f0f0f0; }
.strong { margin-top: 16px; font-weight: 700; }
.hscroll { margin-top: auto; height: 17px; background: #f0f0f0; display: flex; justify-content: flex-end; align-items: center; padding-right: 6px; }

.drawbars { display: flex; margin-top: 3px; padding-left: 3px; height: 28px; gap: 6px; }
.bar { display: flex; align-items: center; height: 27px; padding-left: 3px; background: linear-gradient(#fcfcfc, #ebebeb); }
.bar .sep { margin: 0 3px 0 2px; }
.bar .grip { margin-right: 2px; }
.mb { height: 22px; padding: 0 3px 0 4px; gap: 2px; }
.ib { width: 22px; height: 22px; justify-content: center; flex: none; }
.ib.off { color: #b4b4b4; }
.ib.dd { width: 34px; gap: 6px; }
.glyph { width: 15px; font: bold 17px/20px "Liberation Serif", serif; }
.fmt { font: 16px/20px "Liberation Serif", serif; }
.ib.col { width: 38px; gap: 6px; }
.col span { width: 18px; height: 20px; border-bottom: 3px solid; display: flex; justify-content: center; line-height: 16px; }
.col .glyph { line-height: 16px; }
.col .black { border-color: #000; }
.col .cream { border-color: #ffffb4; }
.col .green { border-color: #50ff00; }
.box { display: flex; align-items: center; height: 20px; border: 1px solid #777; background: #fff; padding: 0 4px 0 3px; }
.box select { flex: 1; min-width: 0; padding-left: 3px; }
.font { width: 169px; }
.size { width: 46px; padding-left: 0; }
.page { width: 126px; border-color: #ccc; color: #777; padding-left: 0; }
.page select { background: #f0f0f0; }
.page .chev { color: #bbb; }
.tiles { width: 174px; border-color: #fff; color: #777; padding-left: 0; }
.tiles .caret { color: #000; }
.status { height: 21px; display: flex; align-items: center; padding: 0 0 0 3px; line-height: 18px; }
.cell { height: 18px; border: 1px solid #f8f8f8; }
.w1 { width: 127px; margin-right: 3px; } .w2 { width: 16px; margin-right: 3px; }
.coords { width: 285px; padding-left: 3px; line-height: 16px; }

/* file manager window */
.explorer { position: absolute; left: 767px; right: 49px; top: 47px; bottom: 72px; background: #fff; display: flex; flex-direction: column; box-shadow: 0 0 8px rgba(0,0,0,.5); }
.extitle { height: 31px; display: flex; align-items: center; padding: 0 18px 0 9px; }
.extitle .sep { margin: 0 6px 0 6px; height: 14px; }
.extitle .i18 { margin-right: 5px; }
.extitle .caret { margin: 0 2px 0 0; }
.extabs { height: 26px; display: flex; align-items: center; border-bottom: 1px solid #dadbdc; padding-right: 4px; }
.filetab { width: 56px; height: 23px; align-self: flex-start; background: #0063b1; color: #fff; justify-content: center; }
.rtab { width: 53px; height: 26px; justify-content: center; color: #333; }
.rtab.on { width: 52px; background: #f5f6f7; border: 1px solid #dadbdc; border-bottom: 0; }
.help { width: 16px; height: 16px; margin-left: 9px; border-radius: 8px; background: #0b62b8; color: #fff; font-weight: 700; text-align: center; }
.ribbon { height: 109px; display: flex; background: #f5f6f7; border-bottom: 1px solid #dadbdc; padding: 3px 0; color: #222; }
.group { display: flex; flex-direction: column; border-right: 1px solid #dfe1e3; flex: none; }
.g1 { width: 256px; } .g2 { width: 187px; } .g3 { width: 138px; } .g4 { width: 126px; } .g5 { width: 86px; }
.gbody { flex: 1; display: flex; align-items: flex-start; }
.glabel { text-align: center; color: #5a5a5a; line-height: 17px; }
.big { flex-direction: column; width: 42px; line-height: 17px; padding-top: 4px; }
.big svg { width: 32px; height: 32px; margin-bottom: 4px; }
.big .caret { width: 7px; height: 4px; margin: 0; }
.gray { color: #777; }
.small { height: 22px; gap: 3px; }
.small .caret { margin-left: 4px; }
.g1 .gbody > .big { width: 38px; }
.g1 .gbody > .big:first-child { width: 58px; margin-left: 3px; }
.g1 .pastecol { margin-left: 2px; }
.pastecol .small { height: 22px; margin-left: 4px; gap: 2px; }
.g1 .stack { margin-left: 8px; }
.g2 .gbody { padding-left: 3px; }
.g2 .sep { margin: 12px 3px 0 4px; height: 56px; background: #dfe1e3; }
.g3 .gbody { padding-left: 3px; }
.g3 .stack { margin-left: 4px; }
.g4 .gbody { padding-left: 2px; }
.g4 .stack { margin-left: 4px; }
.g5 .gbody { padding-left: 7px; }
.stack { padding-top: 2px; }
.loose .small { height: 25px; }
.addrrow { display: flex; align-items: center; height: 42px; padding: 0 13px 0 42px; }
.fwd, .up { width: 14px; height: 14px; }
.addrrow > .chev { margin: 0 10px 0 11px; }
.addr { flex: 1; display: flex; align-items: center; height: 31px; margin: 0 12px 0 5px; border: 1px solid #d9d9d9; padding-left: 3px; }
.addr .cr { width: 6px; height: 9px; margin: 0 9px 0 9px; color: #666; }
.addr .i16 + .cr { margin-left: 7px; }
.reload { width: 32px; height: 29px; margin-left: 10px; border-left: 1px solid #d9d9d9; display: flex; align-items: center; justify-content: center; }
.reload svg, .searchbox svg { width: 12px; height: 12px; }
.searchbox { width: 342px; height: 31px; border: 1px solid #d9d9d9; display: flex; align-items: center; gap: 14px; padding: 0 3px 0 14px; color: #6d6d6d; }
.searchbox input { flex: 1; min-width: 0; }
.searchbox input::placeholder { color: #6d6d6d; }
.exmain { flex: 1; min-height: 0; display: flex; padding-top: 1px; }
.navpane { width: 179px; border-right: 1px solid #eee; padding-top: 15px; overflow: hidden; }
.navpane a { display: flex; align-items: center; height: 24px; gap: 5px; padding-left: 32px; width: 176px; white-space: nowrap; overflow: hidden; }
.navpane span { flex: 1; min-width: 0; overflow: hidden; }
.navpane .l0 { padding-left: 24px; }
.navpane .gap { margin-top: 8px; }
.navpane .pin { width: 12px; height: 12px; margin-right: 3px; }
.navpane .sel { background: #d9d9d9; }
.files { flex: 1; padding-left: 15px; }
.files table { border-collapse: collapse; table-layout: fixed; width: 455px; }
.f1 { width: 257px; } .f2 { width: 120px; } .f3 { width: 78px; }
.files th { height: 28px; font-weight: 400; text-align: left; color: #4c607a; padding: 0 6px; border-right: 1px solid #e5e5e5; position: relative; }
.files th:first-child { padding-left: 3px; }
.sort { position: absolute; left: 122px; top: 0; width: 10px; height: 6px; }
.files tbody::before { content: ""; display: block; height: 5px; }
.files td { height: 21px; padding: 0 5px 0 6px; color: #6d6d6d; white-space: nowrap; }
.files td:first-child { color: #000; padding-left: 4px; display: flex; align-items: center; gap: 4px; }
.files td:last-child { text-align: right; }
.files .sel { background: #cce8ff; outline: 1px solid #99d1ff; outline-offset: -1px; }
.exstatus { height: 25px; display: flex; align-items: center; padding: 0 10px 0 14px; color: #1e395b; }
.exstatus .sep { margin: 0 10px; height: 12px; background: #e5e5e5; }
.exstatus .i24 { margin-right: 4px; }

/* tool dialog */
.dialog { position: absolute; left: 27px; top: 61px; width: 774px; height: 681px; display: flex; flex-direction: column; border: 1px solid #222; background: #f0f0f0; box-shadow: 0 0 8px 2px rgba(90,165,245,.7); }
.dtitle { height: 30px; display: flex; align-items: center; gap: 4px; padding: 0 17px 0 7px; background: #fff; flex: none; }
.dbody { flex: 1; display: flex; border-top: 2px solid #777; border-left: 1px solid #777; border-bottom: 1px solid #fff; margin-right: 3px; }
.fields { flex: 1; padding: 11px 10px 0 20px; font-family: "Liberation Serif", "Noto Sans CJK SC", serif; display: flex; flex-direction: column; align-items: stretch; }
.fields > label { line-height: 18px; }
.line { display: flex; align-items: center; gap: 10px; height: 24px; margin-top: -2px; }
.line + label:not(.check) { margin-top: 2px; }
.combo { width: 684px; height: 20px; background: #fff; display: flex; border: 1px solid #fff; border-top: 2px solid #777; border-left: 2px solid #777; margin-right: 3px; }
.combo select { flex: 1; line-height: 16px; }
.arrow { width: 15px; background: #f0f0f0; border: 1px solid #777; border-width: 0 1px 1px 0; display: flex; align-items: center; justify-content: center; }
.text { width: 687px; height: 20px; border: 1px solid #777; background: #fff; padding: 0 2px; }
.browse { width: 24px; height: 24px; border: 1px solid #adadad; background: #e1e1e1; justify-content: center; flex: none; }
.check { display: flex; align-items: center; gap: 3px; margin: 8px 0 6px 3px; }
.check input { appearance: none; width: 13px; height: 13px; border: 1px solid #333; background: #fff; display: grid; place-items: center; }
.check input:checked::after { content: ""; width: 4px; height: 8px; border: solid #222; border-width: 0 1px 1px 0; transform: rotate(40deg); margin-bottom: 2px; }
.dscroll { width: 17px; background: #f7f7f7; display: flex; flex-direction: column; align-items: center; justify-content: space-between; padding: 17px 0; color: #bbb; }
.dscroll svg { width: 14px; height: 9px; }
.dfoot { height: 44px; display: flex; justify-content: flex-end; align-items: flex-start; gap: 7px; padding: 11px 9px 0; flex: none; }
.dfoot button { width: 73px; height: 21px; justify-content: center; border: 1px solid #adadad; background: #e1e1e1; }
.dfoot .def { border: 2px solid #0078d7; }
.dfoot .wide { width: 88px; }
.dfoot .wider { width: 97px; }

/* annotations over both windows */
.mark { position: absolute; border: 6px solid #ed1c24; border-radius: 3px; pointer-events: none; }
.markdialog { left: 15px; top: 48px; width: 753px; height: 696px; }
.markfile { left: 944px; top: 321px; width: 505px; height: 52px; }
.markarrow { position: absolute; left: 772px; top: 352px; width: 170px; height: 66px; }
.watermark { position: absolute; left: 1512px; top: 918px; display: flex; align-items: center; gap: 8px; color: #fff; font-size: 47px; line-height: 66px; white-space: nowrap; text-shadow: 1px 1px 1px #444; }
.watermark svg { width: 78px; height: 66px; }
```
